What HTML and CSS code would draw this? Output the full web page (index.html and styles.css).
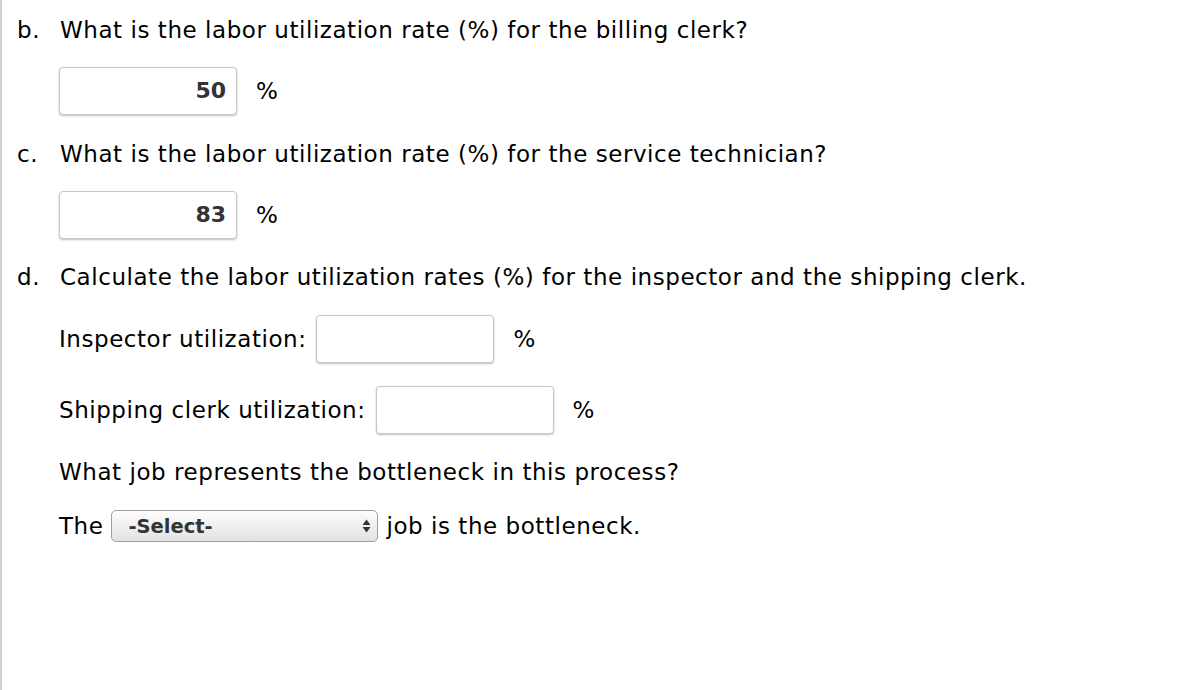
FILE: index.html
```html
<!DOCTYPE html>
<html>
<head>
<meta charset="utf-8">
<link rel="stylesheet" href="styles.css">
</head>
<body>
<div class="page">
  <div class="q">
    <div class="qline"><span class="lbl">b.</span><span>What is the labor utilization rate (%) for the billing clerk?</span></div>
    <div class="answer"><span class="box filled">50</span><span class="pct">%</span></div>
  </div>
  <div class="q">
    <div class="qline"><span class="lbl">c.</span><span>What is the labor utilization rate (%) for the service technician?</span></div>
    <div class="answer"><span class="box filled">83</span><span class="pct">%</span></div>
  </div>
  <div class="q">
    <div class="qline"><span class="lbl">d.</span><span>Calculate the labor utilization rates (%) for the inspector and the shipping clerk.</span></div>
    <div class="row r1"><span>Inspector utilization:</span><span class="box"></span><span class="pct">%</span></div>
    <div class="row r2"><span>Shipping clerk utilization:</span><span class="box"></span><span class="pct">%</span></div>
    <div class="plain">What job represents the bottleneck in this process?</div>
    <div class="row r3"><span>The</span><span class="select"><span class="seltext">-Select-</span><svg class="arrows" width="9" height="14" viewBox="0 0 9 14"><path d="M0.5 6 L4.5 0.5 L8.5 6 Z M0.5 8 L4.5 13.5 L8.5 8 Z" fill="#333"/></svg></span><span>job is the bottleneck.</span></div>
  </div>
</div>
</body>
</html>
```
FILE: styles.css
```css
html, body { margin: 0; padding: 0; background: #fff; }
.page {
  height: 690px;
  border-left: 2px solid #d0d0d0;
  box-sizing: border-box;
  padding-left: 15px;
  padding-top: 14px;
  font-family: "DejaVu Sans", Verdana, sans-serif;
  font-size: 23px;
  letter-spacing: 0.55px;
  color: #000;
}
.qline { display: flex; height: 32px; align-items: center; }
.lbl { width: 43px; }
.answer { display: flex; align-items: center; margin-top: 21px; margin-left: 42px; }
.q:nth-child(1) .answer { margin-bottom: 23px; }
.q:nth-child(2) .answer { margin-bottom: 22px; }
.box {
  display: inline-block;
  box-sizing: border-box;
  width: 178px;
  height: 48px;
  border: 1px solid #c8c8c8;
  border-radius: 4px;
  box-shadow: 0 1px 2px rgba(0,0,0,0.25);
  background: #fff;
}
.box.filled {
  text-align: right;
  padding-right: 10px;
  line-height: 46px;
  font-weight: bold;
  font-size: 22px;
  letter-spacing: 0;
  color: #333;
}
.pct { margin-left: 19px; }
.row { display: flex; align-items: center; margin-left: 42px; gap: 10px; }
.row .pct { margin-left: 9px; }
.r1 { margin-top: 22px; }
.r2 { margin-top: 23px; }
.plain { margin-left: 42px; margin-top: 22px; height: 32px; line-height: 32px; }
.r3 { margin-top: 22px; gap: 8px; }
.select {
  box-sizing: border-box;
  width: 267px;
  height: 32px;
  border: 1px solid #a0a0a0;
  border-radius: 5px;
  background: linear-gradient(#fdfdfd, #e2e2e2);
  display: flex;
  align-items: center;
  justify-content: space-between;
  padding: 0 6px 0 16px;
  letter-spacing: 0;
}
.seltext { font-family: "DejaVu Sans", Verdana, sans-serif; font-weight: bold; font-size: 19.5px; color: #333; }
```
